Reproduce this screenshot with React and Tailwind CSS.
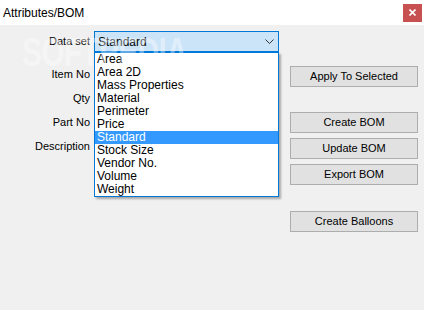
import React from 'react';

const items = [
  'Area',
  'Area 2D',
  'Mass Properties',
  'Material',
  'Perimeter',
  'Price',
  'Standard',
  'Stock Size',
  'Vendor No.',
  'Volume',
  'Weight',
];

const Button = ({ children, className = '' }) => (
  <div
    className={
      'h-[21px] w-[128px] flex items-center justify-center bg-[#e1e1e1] border border-[#adadad] text-[11px] text-black ' +
      className
    }
  >
    {children}
  </div>
);

const App = () => {
  return (
    <div
      className="w-[424px] h-[310px] bg-[#f0f0f0] flex flex-col overflow-hidden relative"
      style={{ fontFamily: '"Liberation Sans", Arial, sans-serif' }}
    >
      {/* Title bar */}
      <div className="h-[25px] bg-white flex items-center justify-between pl-[3px] pr-[2px]">
        <span className="text-[12px] text-black">Attributes/BOM</span>
        <div className="w-[19px] h-[18px] bg-[#c75050] flex items-center justify-center">
          <svg width="7" height="7" viewBox="0 0 7 7">
            <path d="M0.5 0.5 L6.5 6.5 M6.5 0.5 L0.5 6.5" stroke="white" strokeWidth="1.6" />
          </svg>
        </div>
      </div>

      {/* Body */}
      <div className="flex pt-[6px] relative text-[11px] text-black">
        {/* Labels */}
        <div className="w-[90px] flex flex-col items-end">
          <div className="h-[20px] flex items-center">Data set</div>
          <div className="mt-[13px] flex flex-col items-end gap-[4px]">
            <div className="h-[20px] flex items-center">Item No</div>
            <div className="h-[20px] flex items-center">Qty</div>
            <div className="h-[20px] flex items-center">Part No</div>
            <div className="h-[20px] flex items-center">Description</div>
          </div>
        </div>

        {/* Combo */}
        <div className="ml-[4px] w-[185px] relative">
          <div className="h-[21px] border border-[#0078d7] bg-[#cce4f7] flex items-center justify-between pl-[3px] pr-[4px] text-[12px]">
            <span>Standard</span>
            <svg width="9" height="6" viewBox="0 0 9 6">
              <path d="M0.5 0.5 L4.5 4.5 L8.5 0.5" stroke="#333" strokeWidth="1" fill="none" />
            </svg>
          </div>
          <div className="absolute left-0 top-[21px] w-[185px] bg-white border border-[#0078d7] shadow-[2px_2px_2px_rgba(0,0,0,0.3)] flex flex-col">
            {items.map((it) => (
              <div
                key={it}
                className={
                  'h-[13px] leading-[13px] pl-[2px] text-[12px] ' +
                  (it === 'Standard' ? 'bg-[#3399ff] text-white' : '')
                }
              >
                {it}
              </div>
            ))}
          </div>
        </div>

        {/* Buttons */}
        <div className="ml-[11px] flex flex-col pt-[35px]">
          <Button>Apply To Selected</Button>
          <div className="mt-[25px] flex flex-col gap-[5px]">
            <Button>Create BOM</Button>
            <Button>Update BOM</Button>
            <Button>Export BOM</Button>
          </div>
          <Button className="mt-[26px]">Create Balloons</Button>
        </div>
      </div>

      {/* Watermark over the window */}
      <div className="absolute left-[22px] top-[22px] text-[40px] font-bold text-white/40 tracking-tight scale-x-75 origin-left select-none pointer-events-none">
        SOFTPEDIA
      </div>
    </div>
  );
};

export default App;
